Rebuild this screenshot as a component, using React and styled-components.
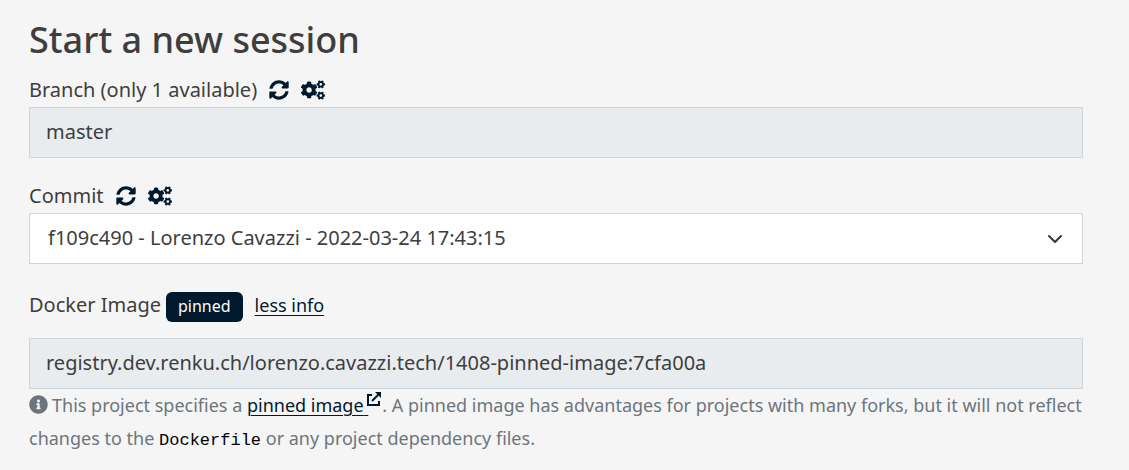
import React from "react";
import styled, { createGlobalStyle } from "styled-components";
import { FaSyncAlt, FaCogs, FaInfoCircle } from "react-icons/fa";

const GlobalStyle = createGlobalStyle`
  *, *::before, *::after { box-sizing: border-box; }
  body {
    margin: 0;
    background: #f5f5f5;
    color: #3e3e3e;
    font-family: "Noto Sans", "Open Sans", sans-serif;
    font-size: 20px;
    line-height: 32px;
  }
`;

const Page = styled.main`
  padding: 16px 46px 16px 29px;
`;

const Title = styled.h1`
  margin: 0 0 10px;
  font-size: 36px;
  line-height: 48px;
  font-weight: 500;
`;

const Field = styled.div`
  margin-bottom: ${({ $gap }) => $gap}px;
`;

const LabelRow = styled.div`
  display: flex;
  align-items: ${({ $align = "center" }) => $align};
  min-height: 32px;
  margin-bottom: ${({ $gap = 1 }) => $gap}px;
`;

const IconButton = styled.button`
  display: flex;
  margin-left: 12px;
  padding: 0;
  border: 0;
  background: none;
  color: #01192d;
  font-size: 20px;
  cursor: pointer;
`;

const TextInput = styled.input`
  display: block;
  width: 100%;
  height: 51px;
  padding: 0 16px 2px;
  border: 1px solid #ced4da;
  border-radius: 0;
  background: #e9ecef;
  color: inherit;
  font: inherit;
`;

const SelectWrap = styled.div`
  display: grid;
  align-items: center;

  > * { grid-area: 1 / 1; }
`;

const Select = styled.select`
  width: 100%;
  height: 51px;
  padding: 0 48px 2px 18px;
  border: 1px solid #ced4da;
  border-radius: 0;
  appearance: none;
  background: #fff;
  color: inherit;
  font: inherit;
`;

const Chevron = styled.svg`
  justify-self: end;
  width: 16px;
  height: 16px;
  margin-right: 20px;
  pointer-events: none;
`;

const Badge = styled.span`
  margin-left: 5px;
  padding: 0 12px 2px;
  border-radius: 6px;
  background: #01192d;
  color: #fff;
  font-size: 16px;
  line-height: 28px;
`;

const LinkButton = styled.button`
  margin-left: 12px;
  padding: 0;
  border: 0;
  background: none;
  color: #01192d;
  font: inherit;
  font-size: 18px;
  line-height: 24px;
  text-decoration: underline 1px;
  text-underline-offset: 3px;
  cursor: pointer;
`;

const Help = styled.p`
  margin: 0 -8px 0 0;
  color: #6c757d;
  font-size: 18px;
  line-height: 33px;
`;

const InfoIcon = styled(FaInfoCircle)`
  width: 19px;
  height: 19px;
  margin-right: 4px;
  vertical-align: -2px;
`;

const DocLink = styled.a`
  color: #01192d;
  text-decoration-thickness: 1px;
  text-underline-offset: 3px;
`;

const ExternalIcon = styled.svg`
  width: 16px;
  height: 16px;
  margin-left: -2px;
  vertical-align: 5px;
`;

const Code = styled.code`
  color: #000;
  font-family: "Liberation Mono", monospace;
  font-size: 17px;
`;

function RefTools({ subject }) {
  return (
    <>
      <IconButton type="button" aria-label={`Refresh ${subject}`}>
        <FaSyncAlt />
      </IconButton>
      <IconButton type="button" aria-label={`Options for ${subject}`}>
        <FaCogs size={24} />
      </IconButton>
    </>
  );
}

export default function App() {
  return (
    <>
      <GlobalStyle />
      <Page>
        <Title>Start a new session</Title>

        <Field $gap={22}>
          <LabelRow>
            <label htmlFor="branch">Branch (only 1 available)</label>
            <RefTools subject="branches" />
          </LabelRow>
          <TextInput id="branch" readOnly value="master" />
        </Field>

        <Field $gap={25}>
          <LabelRow>
            <label htmlFor="commit">Commit</label>
            <RefTools subject="commits" />
          </LabelRow>
          <SelectWrap>
            <Select id="commit" defaultValue="f109c490">
              <option value="f109c490">
                f109c490 - Lorenzo Cavazzi - 2022-03-24 17:43:15
              </option>
            </Select>
            <Chevron viewBox="0 0 16 16" fill="none" aria-hidden="true">
              <path
                d="M2 5l6 6 6-6"
                stroke="#343a40"
                strokeWidth="2"
                strokeLinecap="round"
                strokeLinejoin="round"
              />
            </Chevron>
          </SelectWrap>
        </Field>

        <Field $gap={0}>
          <LabelRow $gap={16} $align="baseline">
            <label htmlFor="image">Docker Image</label>
            <Badge>pinned</Badge>
            <LinkButton type="button">less info</LinkButton>
          </LabelRow>
          <TextInput
            id="image"
            readOnly
            value="registry.dev.renku.ch/lorenzo.cavazzi.tech/1408-pinned-image:7cfa00a"
          />
          <Help>
            <InfoIcon aria-hidden="true" />
            This project specifies a{" "}
            <DocLink href="#pinned-image">
              pinned image{" "}
              <ExternalIcon viewBox="0 0 16 16" fill="none" aria-hidden="true">
                <path
                  d="M6 4H2v10h11v-4"
                  stroke="currentColor"
                  strokeWidth="2"
                />
                <path d="M6 10l7-7" stroke="currentColor" strokeWidth="2" />
                <path d="M9 1h6v6z" fill="currentColor" />
              </ExternalIcon>
            </DocLink>
            . A pinned image has advantages for projects with many forks, but it
            will not reflect changes to the <Code>Dockerfile</Code> or any
            project dependency files.
          </Help>
        </Field>
      </Page>
    </>
  );
}
